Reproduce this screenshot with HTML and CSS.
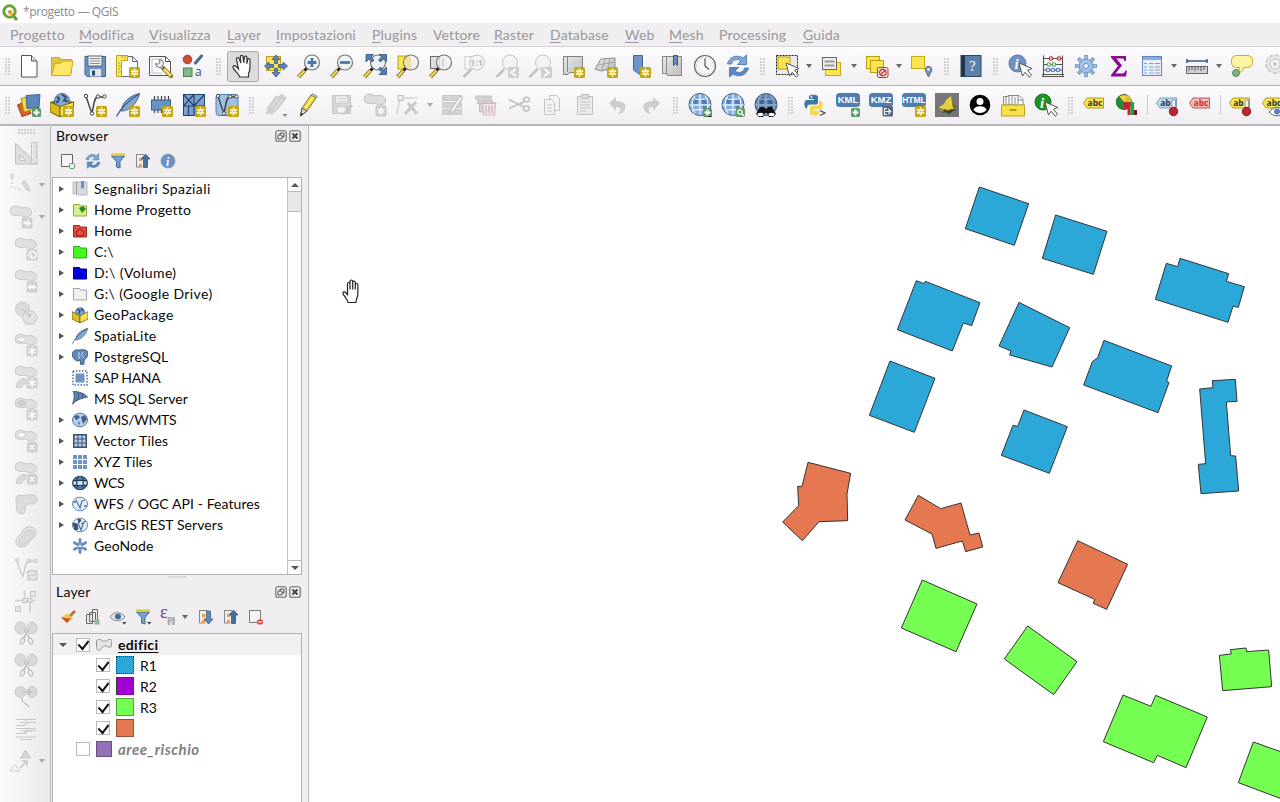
FILE: index.html
```html
<!DOCTYPE html>
<html lang="it">
<head>
<meta charset="utf-8">
<title>*progetto — QGIS</title>
<link rel="stylesheet" href="styles.css">
</head>
<body>
<svg class="paints">
<defs>
<linearGradient id="grey" x1="0" y1="0" x2="1" y2="1"><stop offset="0" stop-color="#e9e9e9"/><stop offset="1" stop-color="#bdbdbd"/></linearGradient>
</defs>
</svg>
<svg class="symbols">
<!-- badges, drawn in the lower right corner of a 24 unit icon -->
<symbol id="b-star" viewBox="0 0 24 24"><rect x="13" y="13" width="11" height="11" rx="1.500" fill="#c5a80f"/><path d="M18.500 14.500v8M15 16.500l7 4M22 16.500l-7 4" stroke="#fffbe0" stroke-width="1.800"/><circle cx="18.500" cy="18.500" r=".8" fill="#c5a80f"/></symbol>
<symbol id="b-plus" viewBox="0 0 24 24"><rect x="15" y="15" width="9" height="9" rx="1.500" fill="#5e9a68"/><path d="M19.500 16.500v6M16.500 19.500h6" stroke="#fff" stroke-width="2"/></symbol>
<symbol id="b-gstar" viewBox="0 0 24 24"><rect x="12.500" y="12.500" width="11" height="11" rx="1.500" fill="#c9c8ca"/><path d="M18 14v8M14.600 16l6.800 4M21.400 16l-6.800 4" stroke="#f8f7f8" stroke-width="1.700"/></symbol>
<symbol id="b-gx" viewBox="0 0 24 24"><rect x="13" y="13" width="10.500" height="10.500" rx="1.500" fill="#c9c8ca"/><path d="M16 16l4.500 4.500M20.500 16l-4.500 4.500" stroke="#fff" stroke-width="1.500"/></symbol>
<symbol id="blob" viewBox="0 0 24 24"><path d="M1.200 6C1.500 .5 7 .3 10 2s4 .3 6.500.5c8 .5 8 9.500.5 9.500-3 0-4-2-6.500-1.800C6 10.500 1 11 1.200 6z" fill="#dddcde" stroke="#bfbec1"/></symbol>
<!-- project toolbar -->
<symbol id="new" viewBox="0 0 24 24"><path d="M4.500 1.500h10l5.500 5.500v16H4.500z" fill="#fff" stroke="#555"/><path d="M14.500 1.500V7h5.500" fill="#ddd" stroke="#555"/></symbol>
<symbol id="open" viewBox="0 0 24 24"><path d="M1.500 21V3.500h8l1.500 2h10.500V19z" fill="#e3c343" stroke="#d1aa1a"/><path d="M1.500 21.500L5 9.500l6-.5 1.500-2h10.500l-2.500 14.500z" fill="#ffe76a" stroke="#d1aa1a"/></symbol>
<symbol id="save" viewBox="0 0 24 24"><path d="M2 2.500h20.500v20H4L2 20.500z" fill="#6e94c4" stroke="#3f638f"/><rect x="5" y="2" width="14" height="10" fill="#f1f1f1" stroke="#49698e"/><path d="M7 4.500h10M7 7h10M7 9.500h10" stroke="#888"/><rect x="7" y="15" width="11" height="7.500" fill="#e6e6e6"/><rect x="9" y="16.500" width="3" height="5" fill="#2d4767"/></symbol>
<symbol id="layout" viewBox="0 0 24 24"><path d="M2.500 2.500h14l5 5v15h-19z" fill="#fff" stroke="#666"/><path d="M16.500 2.500v5h5" fill="none" stroke="#666"/><path d="M.5 1.500h11v5h-6v16h-5z" fill="#fae867" stroke="#bda31a"/><path d="M2 9h2M2 12h3M2 15h2M2 18h3M6 2v2M9 2v3" stroke="#bda31a"/><use href="#b-star"/></symbol>
<symbol id="layouts" viewBox="0 0 24 24"><path d="M.5 2.500h16l5 5v14H.5z" fill="#fff" stroke="#555"/><path d="M16.500 2.500v5h5" fill="none" stroke="#555"/><path d="M3 5h10M3 5v14h10" fill="none" stroke="#b9b7dd"/><path d="M9 9.500l6 5.500" stroke="#777" stroke-width="4"/><path d="M9 9.500l6 5.500" stroke="#eee" stroke-width="2.600"/><path d="M10.500 5.500a4 4 0 11-4 4l2.500.8 1.800-1.800z" fill="#eee" stroke="#666" stroke-width=".9"/><path d="M15 15l7 7" stroke="#7d6c28" stroke-width="4.500" stroke-linecap="round"/><path d="M15 15l7 7" stroke="#f1da68" stroke-width="3"/></symbol>
<symbol id="style" viewBox="0 0 24 24"><circle cx="5.500" cy="5.500" r="4.300" fill="#c94f36" stroke="#9d3a27"/><rect x="1.500" y="14" width="8.500" height="8.500" fill="#80b78c" stroke="#4f8159"/><path d="M13.500 9l6-7" stroke="#46698e" stroke-width="3" stroke-linecap="round"/><text x="13" y="22" font-size="12" class="glyph">a</text></symbol>
<symbol id="hand" viewBox="0 0 24 24"><path d="M8.500 23c0-3-5.500-6-6.500-9.500C1.500 11.500 4 11 5 12.500l2.500 2.300L5.500 5.500c-.5-2 2-2.500 2.600-.7L9.800 9 9.300 3c-.1-2 2.400-2.300 2.700-.2l.8 6 .6-5.500c.3-1.800 2.600-1.500 2.600.4l-.2 6 1-4.200c.5-1.600 2.500-1.200 2.300.6C18.500 9.500 20 16 17.500 19v4z" fill="#fff" stroke="#333" stroke-width="1.200"/></symbol>
<symbol id="panmap" viewBox="0 0 24 24"><rect x="2.500" y="2.500" width="14" height="14" fill="#fbe54e" stroke="#b99e17"/><path d="M12 1l4 4.500h-2.500v4h-3v-4H8zM12 23l4-4.500h-2.500v-4h-3v4H8zM.5 12L5 8v2.500h4.500v3H5V16zM23.500 12L19 8v2.500h-4.500v3H19V16z" fill="#5e87b8" stroke="#355b87" stroke-width=".8"/></symbol>
<symbol id="lens" viewBox="0 0 24 24"><path d="M1.500 23l6-6.500" stroke="#8a7011" stroke-width="4"/><path d="M1.500 23l6-6.500" stroke="#efd45c" stroke-width="2.200"/><path d="M7.500 16.500L10 14" stroke="#222" stroke-width="3"/><circle cx="15" cy="8.500" r="7.500" fill="#eef0f2" fill-opacity=".8" stroke="#777" stroke-width="1.200"/></symbol>
<symbol id="zin" viewBox="0 0 24 24"><use href="#lens"/><path d="M15 4v9M10.500 8.500h9" stroke="#4878ae" stroke-width="2.800"/></symbol>
<symbol id="zout" viewBox="0 0 24 24"><use href="#lens"/><path d="M10 8.500h10" stroke="#4878ae" stroke-width="2.800"/></symbol>
<symbol id="zfull" viewBox="0 0 24 24"><use href="#lens"/><path d="M3 .5h7.500L8 3l3 3-2 2-3-3-3 3zM23.500.5H16L18.500 3l-3 3 2 2 3-3 3 3zM23.500 20.500H16l2.500-2.500-3-3 2-2 3 3 3-3z" fill="#557fb0" stroke="#2f547f" stroke-width=".8"/></symbol>
<symbol id="zsel" viewBox="0 0 24 24"><rect x="2" y="2" width="12" height="13" fill="#fbe54e" stroke="#b99e17"/><use href="#lens"/><path d="M10 3.500h5v10h-5z" fill="#eddf91" opacity=".8"/></symbol>
<symbol id="zlayer" viewBox="0 0 24 24"><path d="M1.500 2.500h9v12h-9z" fill="#ddd" stroke="#666"/><use href="#lens"/><path d="M14 4v9" stroke="#bbb"/></symbol>
<symbol id="glens" viewBox="0 0 24 24"><path d="M1.500 23l8-8" stroke="#c2c1c3" stroke-width="2.500"/><circle cx="15" cy="8.500" r="7.500" fill="#f4f3f4" stroke="#c4c3c5"/></symbol>
<symbol id="znative" viewBox="0 0 24 24"><path d="M3 2v13h8M3 2.500h8" fill="none" stroke="#ccc"/><use href="#glens"/><text x="8" y="12" font-size="9" font-weight="bold" class="glyph pale">1:1</text></symbol>
<symbol id="zlast" viewBox="0 0 24 24"><use href="#glens"/><rect x="13" y="13" width="11" height="11" rx="1" fill="#cfced0"/><path d="M21 15l-5 3.500 5 3.500" fill="none" stroke="#fff" stroke-width="1.600"/></symbol>
<symbol id="znext" viewBox="0 0 24 24"><use href="#glens"/><rect x="13" y="13" width="11" height="11" rx="1" fill="#cfced0"/><path d="M16 15l5 3.500-5 3.500" fill="none" stroke="#fff" stroke-width="1.600"/></symbol>
<symbol id="mapview" viewBox="0 0 24 24"><path d="M2.500 2.500h19v16h-13l-1.500 2h-4.500z" fill="url(#grey)" stroke="#808080"/><path d="M6.500 3v15" stroke="#888"/><use href="#b-star"/></symbol>
<symbol id="map3d" viewBox="0 0 24 24"><path d="M7 5l14-1v10l-14 3-6-2z" fill="url(#grey)" stroke="#8a8a8a"/><path d="M4 11l17-3M11 5l-3 11M16 4l-2 11" stroke="#999" stroke-width=".8"/><use href="#b-star"/></symbol>
<symbol id="bookmarkNew" viewBox="0 0 24 24"><path d="M6.500 1.500h9v21l-9-6.500z" fill="#6d95c5" stroke="#416795"/><use href="#b-star"/></symbol>
<symbol id="bookmarks" viewBox="0 0 24 24"><path d="M2.500 2.500h19v19h-14l-2-2h-3z" fill="url(#grey)" stroke="#858585"/><path d="M6.500 3v17" stroke="#888"/><path d="M13.500 1.500h4v10l-2-2-2 2z" fill="#638bbc" stroke="#355b87"/></symbol>
<symbol id="clock" viewBox="0 0 24 24"><circle cx="12" cy="12" r="10.500" fill="#f6f6f6" stroke="#666" stroke-width="1.200"/><path d="M12 4.500V12l4 3.500" fill="none" stroke="#555" stroke-width="1.200"/><circle cx="12" cy="12" r="8.500" fill="none" stroke="#999" stroke-dasharray="1 3.450"/></symbol>
<symbol id="refresh" viewBox="0 0 24 24"><path d="M1.500 10C3 3 11 0 17 4l3.500-3V10.500h-9L15 7c-4-3-9-1-9.500 3z" fill="#83a8d4" stroke="#3c71ad" stroke-width=".8"/><path d="M22.500 14C21 21 13 24 7 20l-3.500 3V13.500h9L9 17c4 3 9 1 9.500-3z" fill="#5c8ac0" stroke="#3c71ad" stroke-width=".8"/></symbol>
<symbol id="arrowcur" viewBox="0 0 24 24"><path d="M11 9l13 5.500-4.500 1.700 4 5-2.300 2-4-5L14.500 22z" fill="#fff" stroke="#555"/></symbol>
<symbol id="select" viewBox="0 0 24 24"><rect x="1.500" y="1.500" width="21" height="19" fill="#ebe9ec" stroke="#222" stroke-dasharray="2 1"/><rect x="3" y="3" width="12" height="12" fill="#fbe54e" stroke="#b99e17"/><use href="#arrowcur"/></symbol>
<symbol id="selform" viewBox="0 0 24 24"><rect x="5.500" y="8.500" width="15" height="13" fill="#fbe54e" stroke="#c7aa16"/><rect x="2.500" y="3.500" width="14" height="12" fill="#eee" stroke="#666"/><path d="M4.500 7.500h10M4.500 11.500h10" stroke="#999" stroke-width="2"/></symbol>
<symbol id="deselect" viewBox="0 0 24 24"><rect x="1.500" y="2.500" width="13" height="12" fill="#fbe54e" stroke="#b99e17"/><rect x="5.500" y="6.500" width="13" height="12" fill="#fbe54e" stroke="#b99e17"/><rect x="12.500" y="13.500" width="10.500" height="10" rx="1.500" fill="#f5e0e0" stroke="#c0342d"/><circle cx="17.800" cy="18.500" r="3.200" fill="none" stroke="#c0342d" stroke-width="1.200"/><path d="M15.500 20.700l4.600-4.400" stroke="#c0342d" stroke-width="1.300"/></symbol>
<symbol id="selloc" viewBox="0 0 24 24"><rect x="1.500" y="2.500" width="13" height="12" fill="#fbe54e" stroke="#c7aa16"/><path d="M18.500 23l-3-6a3.300 3.300 0 116 0z" fill="#7a8fa8" stroke="#5b7089"/><circle cx="18.500" cy="15.500" r="1.200" fill="#fff"/></symbol>
<symbol id="help" viewBox="0 0 24 24"><rect x="2" y="1.500" width="20" height="21" fill="#5a80ae" stroke="#31465f"/><path d="M2 1.500h4v21H2z" fill="#23364d"/><text x="10" y="17" font-size="15" class="glyph serif">?</text></symbol>
<symbol id="identify" viewBox="0 0 24 24"><circle cx="9.500" cy="9.500" r="8.500" fill="#6c93c2" stroke="#58789d"/><text x="6.500" y="15" font-size="15" class="glyph serif ital">i</text><use href="#arrowcur"/></symbol>
<symbol id="abacus" viewBox="0 0 24 24"><path d="M2.500 1.500v21M21.500 1.500v21M1 22.500h22M1 20.500h22M2 4.500h20M2 10.500h20M2 16h20" stroke="#555" stroke-width="1.100"/><g stroke-width="1.100"><g fill="#f4d1cd" stroke="#c2271f"><circle cx="10" cy="4.500" r="1.800"/><circle cx="18" cy="4.500" r="1.800"/></g><g fill="#d5f0d6" stroke="#5aa35e"><circle cx="8" cy="10.500" r="1.800"/><circle cx="13" cy="10.500" r="1.800"/></g><g fill="#d3e2f5" stroke="#4c7db6"><circle cx="7" cy="16" r="1.800"/><circle cx="12" cy="16" r="1.800"/><circle cx="17" cy="16" r="1.800"/></g></g></symbol>
<symbol id="gear" viewBox="0 0 24 24"><path d="M12 1v22M1 12h22M4.200 4.200l15.600 15.600M19.800 4.200L4.200 19.800" stroke="#6891c4" stroke-width="3.600"/><path d="M12 2v20M2 12h20M5 5l14 14M19 5L5 19" stroke="#a2c1e7" stroke-width="2"/><circle cx="12" cy="12" r="7" fill="#a2c1e7" stroke="#6891c4"/><circle cx="12" cy="12" r="2.500" fill="#f5f4f6" stroke="#6891c4"/></symbol>
<symbol id="sigma" viewBox="0 0 24 24"><path d="M4 2h15v5h-1.500c-.5-2-1-2.500-3-2.500H9.500l5.500 7-6.500 8h6.500c2 0 3-1 3.500-3H20l-1 6H4v-1.500L11 12 4 3.500z" fill="#8c0a94"/></symbol>
<symbol id="table" viewBox="0 0 24 24"><rect x="2.500" y="2.500" width="19" height="19" fill="#e9f0fa" stroke="#5e88bd"/><path d="M3 4.500h18" stroke="#89aedb" stroke-width="3"/><path d="M4 9.500h3M9 9.500h4.500M15 9.500h5M4 13h3M9 13h4.500M15 13h5M4 16h3M9 16h4.500M15 16h5M4 19h3M9 19h4.500M15 19h5" stroke="#7f9fc9" stroke-width="1.200"/></symbol>
<symbol id="measure" viewBox="0 0 24 24"><path d="M2 7h20M2 5v4M22 5v4" stroke="#355b87" stroke-width="1.600"/><rect x="1.500" y="12.500" width="21" height="7" fill="#d2d2d2" stroke="#666"/><path d="M4 13v4M7 13v3M10 13v4M13 13v3M16 13v4M19 13v3" stroke="#555"/></symbol>
<symbol id="tip" viewBox="0 0 24 24"><rect x="1.500" y="1.500" width="21" height="12" rx="5" fill="#fdf5a2" stroke="#c7aa16"/><path d="M9 13h6l-6 7z" fill="#fdf5a2" stroke="#c7aa16"/><path d="M9.500 12.500h5" stroke="#fdf5a2" stroke-width="2"/><circle cx="6" cy="19" r="3.500" fill="#7eb184" stroke="#5c8c62"/></symbol>
<symbol id="play" viewBox="0 0 24 24"><circle cx="12" cy="10" r="9" fill="#e5e4e6" stroke="#ccc" stroke-dasharray="4 2" stroke-width="2"/><circle cx="12" cy="10" r="5" fill="#f4f4f4" stroke="#c3c3c3"/><path d="M10.500 7.500l4 2.500-4 2.500z" fill="#bbb"/></symbol>
<!-- data source toolbar -->
<symbol id="sources" viewBox="0 0 24 24"><path d="M.5 12L8 8.500l6 12-9 3z" fill="#d7612c" stroke="#973f1a"/><path d="M4 5.500l8-2 5 13-10 2.500z" fill="#f1d845" stroke="#ab8f11"/><path d="M9 2.500l14-1-1 13-12 1z" fill="#5b87bb" stroke="#416795"/><use href="#b-plus"/></symbol>
<symbol id="gpkg" viewBox="0 0 24 24"><path d="M0 9l11-4 13 4-13 5z" fill="#8f7813"/><circle cx="12" cy="8" r="7.500" fill="#86a9d0" stroke="#4c6b90"/><path d="M7 3.500l2 2-1 3-2 1M12 1.500l4 3-2 3 4 1" fill="none" stroke="#2f5077" stroke-width="2"/><path d="M0 9l10 4.500V24L0 19z" fill="#d8bb1f" stroke="#75600c"/><path d="M10 13.500L23.500 9v10L10 24z" fill="#f8e24d" stroke="#75600c"/><use href="#b-star"/></symbol>
<symbol id="vnew" viewBox="0 0 24 24"><path d="M3 3.500C5 8 6 14 9 20 11 12 11 4 15 4h5" fill="none" stroke="#444" stroke-width="1.500"/><g fill="#fff" stroke="#444"><circle cx="3" cy="3" r="1.700"/><circle cx="9" cy="20.500" r="1.700"/><circle cx="15" cy="3.500" r="1.700"/><circle cx="21.500" cy="3.500" r="1.700"/></g></symbol>
<symbol id="shp" viewBox="0 0 24 24"><use href="#vnew"/><use href="#b-star"/></symbol>
<symbol id="feather" viewBox="0 0 24 24"><path d="M23.500.5C17 2 10 6 7 12c-1 2-1 4-2 6C14 18 22 9 23.500.500z" fill="#86a8d1" stroke="#3d5f87"/><path d="M.5 23.500C5 15 13 7 23 1" fill="none" stroke="#355b87" stroke-width="1.200"/></symbol>
<symbol id="spatial" viewBox="0 0 24 24"><use href="#feather"/><use href="#b-star"/></symbol>
<symbol id="chip" viewBox="0 0 24 24"><path d="M5.500 3v17M9 3v17M12.500 3v17M16 3v16M19.500 3v16" stroke="#444" stroke-width="1.200"/><rect x="2.500" y="7" width="19" height="10" fill="#6793c6" stroke="#3b618e"/><use href="#b-star"/></symbol>
<symbol id="mesh" viewBox="0 0 24 24"><rect x="1.500" y="1.500" width="21" height="21" fill="#7aa1d0" stroke="#22456e"/><path d="M12 1.500v21M1.500 13h21M1.500 1.500L12 13M12 1.500L1.500 13M12 13L22.500 1.500M6.500 13v10" stroke="#22456e" stroke-width="1.200"/><use href="#b-star"/></symbol>
<symbol id="virt" viewBox="0 0 24 24"><rect x="1" y="1.500" width="22" height="21" rx="3" fill="#9fc0e5" stroke="#567fae"/><use href="#vnew"/><use href="#b-star"/></symbol>
<!-- editing -->
<symbol id="pens" viewBox="0 0 24 24"><path d="M2.500 21l1-6L12 3l2.500 1 3-3 2 1 1 1.500 2 1-9 12-6 5-1.500-1.500z" fill="#cfced0" stroke="#cfced0"/><path d="M7 14l7-9M10 17l8-11" stroke="#dddcde" stroke-width="1.300"/><path d="M18.500 21h5L21 24z" fill="#8c8b8d"/></symbol>
<symbol id="pencil" viewBox="0 0 24 24"><path d="M3.500 23l1.500-8L14 2l5 3-9 13z" fill="#e3d343" stroke="#8d7d15"/><path d="M3.500 23l1.500-8 5 3z" fill="#dcd6cb" stroke="#555"/><path d="M3.500 23l.6-3.200 2 1.200z" fill="#222"/><path d="M14 2l1.500-1.500 5 3L19 5z" fill="#b9cdb4" stroke="#628261" stroke-width=".7"/><path d="M8 15.500L16 4" stroke="#fff59d" stroke-width="1.500"/></symbol>
<symbol id="gsave" viewBox="0 0 24 24"><path d="M2.500 2.500h18v18h-18z" fill="#d6d5d7" stroke="#c5c4c6"/><path d="M5.500 3h12v7h-12zM7 14h9v6H7z" fill="#f5f4f5" stroke="#ccc"/><path d="M7 5.500h9M7 8h9" stroke="#ccc"/><path d="M13 22l2-5 5-6 3 2-5 7z" fill="#c9c8ca"/></symbol>
<symbol id="gadd" viewBox="0 0 24 24"><use href="#blob"/><use href="#b-gstar"/></symbol>
<symbol id="gvert" viewBox="0 0 24 24"><path d="M1 21L4 5h18" fill="none" stroke="#c4c3c5"/><rect x="2" y="2.500" width="5" height="5" fill="#eee" stroke="#bbb"/><path d="M12 10l9 11M20 9L9 21" stroke="#c9c8ca" stroke-width="3.200"/></symbol>
<symbol id="gattr" viewBox="0 0 24 24"><path d="M1.500 2.500h19v5h-19zM1.500 9.500h19v5h-19zM1.500 16.500h19v5h-19z" fill="#d3d2d4" stroke="#c9c8ca"/><path d="M9 21l1.500-5.500L19 3l3 2-9 13z" fill="#eeedef" stroke="#bbb"/></symbol>
<symbol id="gtrash" viewBox="0 0 24 24"><path d="M1.500 3h16v3h-16zM3.500 7.500h15v3h-15zM5.500 11h4v8h-4z" fill="#d3d2d4" stroke="#c0bfc1"/><path d="M8.500 10.500h13l-1 11.500h-11z" fill="#f0e3e6" stroke="#cdb9be"/><path d="M7.500 10h15M12 13v7M15 13v7M18 13v7" stroke="#cdb9be" stroke-width="1.400"/></symbol>
<symbol id="cut" viewBox="0 0 24 24"><path d="M1.500 6.500l16 7.500M2 15.500L18 8.500" stroke="#c0bfc1" stroke-width="1.700"/><g fill="none" stroke="#c0bfc1" stroke-width="1.500"><ellipse cx="19.500" cy="6.500" rx="3" ry="2.300"/><ellipse cx="19.500" cy="15.500" rx="3" ry="2.500"/></g></symbol>
<symbol id="copy" viewBox="0 0 24 24"><g fill="#f5f4f5" stroke="#c3c2c4"><path d="M9.500 2.500h7l3 3v12h-10z"/><path d="M4.500 6.500h7l3 3v12h-10z"/><path d="M7 12h5M7 15h5M7 18h5"/></g></symbol>
<symbol id="paste" viewBox="0 0 24 24"><path d="M4.500 3.500h15v18h-15z" fill="#eae9eb" stroke="#bfbec0"/><path d="M8.500 1.500h7v4h-7z" fill="#ddd" stroke="#bbb"/><path d="M7 9h10M7 12h10M7 15h10M7 18h6" stroke="#c7c6c8"/></symbol>
<symbol id="undo" viewBox="0 0 24 24"><path d="M3 10l7-6v4c8 0 11 4 9 8-1 3-4 5-7 5 3-3 4-7-2-7v4z" fill="#cdccce"/></symbol>
<symbol id="redo" viewBox="0 0 24 24"><path d="M21 10l-7-6v4c-8 0-11 4-9 8 1 3 4 5 7 5-3-3-4-7 2-7v4z" fill="#cdccce"/></symbol>
<!-- plugins -->
<symbol id="globe" viewBox="0 0 24 24"><circle cx="12" cy="11.500" r="11" fill="#83aee0" stroke="#42617f"/><path d="M5 7l3-3 3 2-2 5-3 1zM13 7l5-2 3 5-3 6-3-1z" fill="#3f6898" opacity=".7"/><path d="M4 5c4 2 12 2 16 0M1.500 12h21M4 18c4-2 12-2 16 0M12 1v21M7 2.500c-4 6-4 12 0 18M17 2.500c4 6 4 12 0 18" fill="none" stroke="#e5effb" stroke-width="1.300"/></symbol>
<symbol id="globeadd" viewBox="0 0 24 24"><use href="#globe"/><use href="#b-plus"/><path d="M19 23h5l-2.500 2z" fill="#222"/></symbol>
<symbol id="globefind" viewBox="0 0 24 24"><use href="#globe"/><rect x="15" y="15" width="9" height="9" rx="1.500" fill="#5e9a68"/><circle cx="19" cy="19" r="2.200" fill="none" stroke="#fff" stroke-width="1.200"/><path d="M20.500 20.500l2.500 2.500" stroke="#fff" stroke-width="1.300"/></symbol>
<symbol id="binoc" viewBox="0 0 24 24"><use href="#globe"/><circle cx="12" cy="11.500" r="11" fill="#274b77" opacity=".4"/><path d="M6 14h4l1 1.500h2L14 14h4l4 7-3 3h-4l-2-4h-2l-2 4H5l-3-3z" fill="#111"/><g fill="#fff"><ellipse cx="6.500" cy="21.500" rx="3" ry="1.700"/><ellipse cx="17.500" cy="21.500" rx="3" ry="1.700"/></g></symbol>
<symbol id="python" viewBox="0 0 24 24"><path d="M6 6V3.500C6 1 15 1 15 3.500V9c0 2-1 2.500-3 2.500H7c-2 0-3 1-3 4C.5 15.500.5 7 4 7h7V6z" fill="#3d78a9"/><path d="M16 7.500c5-.5 5 9 1 9h-6V18h5v2.500c0 2.500-9 2.500-9 0V15c0-2 1-2.500 3-2.500h4c2 0 2-1 2-5z" fill="#f7d948"/><circle cx="8.500" cy="4" r=".9" fill="#fff"/><path d="M17 17.500l5 2.500-5 2.500" fill="none" stroke="#444" stroke-width="1.200"/></symbol>
<symbol id="tagbox" viewBox="0 0 24 24"><rect x="0" y="0" width="24" height="14" rx="3.500" fill="#4d7db1"/></symbol>
<symbol id="kml" viewBox="0 0 24 24"><use href="#tagbox"/><text x="12" y="10" class="tag">KML</text><use href="#b-plus"/></symbol>
<symbol id="kmz" viewBox="0 0 24 24"><use href="#tagbox"/><text x="12" y="10" class="tag">KMZ</text><rect x="13.500" y="13" width="10.500" height="10.500" rx="1.500" fill="#53677f"/><path d="M16.500 18.500h5M19 16l2.800 2.500L19 21M18 15.500h-2.500v6H18" fill="none" stroke="#fff" stroke-width="1.100"/></symbol>
<symbol id="html" viewBox="0 0 24 24"><use href="#tagbox"/><text x="12" y="10" class="tag tight">HTML</text><use href="#b-star"/></symbol>
<symbol id="profile" viewBox="0 0 24 24"><rect width="24" height="24" fill="#777579"/><path d="M3 15l6-4 2-4 5-4 2 7 3 3-4 4-6 2-4-1z" fill="#e6cf3c"/><path d="M16 3l2 7 4 4-4 1z" fill="#6a5d1a"/><path d="M1 14l6 2 5 2 5-2 5 1-5 1.500-3 3-3-2.500-4 1 2-2z" fill="#1f4a22"/><path d="M9 16.500l4 1 5-1" stroke="#963c1f" stroke-width="1.200" fill="none"/></symbol>
<symbol id="user" viewBox="0 0 24 24"><circle cx="12" cy="12" r="10.300" fill="#000"/><circle cx="12" cy="8.500" r="3.500" fill="#fff"/><path d="M5.500 17c1-5 12-5 13 0-3 4-10 4-13 0z" fill="#fff"/></symbol>
<symbol id="archive" viewBox="0 0 24 24"><path d="M2.500 12V3.500H7v-1h11l4 4V12z" fill="#fff" stroke="#888"/><path d="M5 4v8M8 3v9M11 3v9M14 4v8M17 3v4h5M17 7v5" fill="none" stroke="#888"/><rect x=".5" y="12" width="23" height="11" fill="#f6e04a" stroke="#bca21c"/><rect x="8.500" y="16" width="7" height="2" fill="#b79712"/></symbol>
<symbol id="ginfo" viewBox="0 0 24 24"><circle cx="9" cy="9" r="8" fill="#1f941f" stroke="#167116"/><text x="6" y="14.500" font-size="15" class="glyph serif ital">i</text><use href="#arrowcur"/></symbol>
<symbol id="lab" viewBox="0 0 24 24"><path d="M1.500 10L5 5h16.500v10H5z"/></symbol>
<symbol id="label" viewBox="0 0 24 24"><use href="#lab" fill="#f7e65a" stroke="#b79b17"/><text x="13" y="13" class="abc">abc</text></symbol>
<symbol id="diagram" viewBox="0 0 24 24"><circle cx="9" cy="9" r="7.500" fill="#f0d53e" stroke="#554a18"/><path d="M9 9L4 3A7.500 7.500 0 009 16.500z" fill="#288638"/><path d="M9 9l3-7A7.500 7.500 0 0116.500 9z" fill="#d8c22f"/><path d="M9 9h7.500A7.500 7.500 0 019 16.500z" fill="#c8232c"/><path d="M12.500 12h3v10h-3z" fill="#d41f2b"/><path d="M15.500 9H19v13h-3.500z" fill="#1ca34a"/><path d="M19 17h3v5h-3z" fill="#72141a"/></symbol>
<symbol id="pin" viewBox="0 0 24 24"><path d="M17 7h3.500v8H17z" fill="#f4f4f4" stroke="#888" stroke-width=".8"/><circle cx="18.500" cy="18.500" r="4.200" fill="#bd2430" stroke="#8b1a22"/></symbol>
<symbol id="labpin" viewBox="0 0 24 24"><use href="#lab" fill="#bed8f4" stroke="#7a9fc7"/><text x="10.500" y="13" class="abc">ab</text><use href="#pin"/></symbol>
<symbol id="labred" viewBox="0 0 24 24"><use href="#lab" fill="#f5bcbc" stroke="#a95a5a"/><text x="13" y="13" class="abc red">abc</text></symbol>
<symbol id="labypin" viewBox="0 0 24 24"><use href="#lab" fill="#f7e65a" stroke="#b79b17"/><text x="10.500" y="13" class="abc">ab</text><use href="#pin"/></symbol>
<symbol id="labeye" viewBox="0 0 24 24"><use href="#label"/><path d="M8 19c4-6 12-6 16 0-4 5-12 5-16 0z" fill="#fff" stroke="#666"/><circle cx="16" cy="18.500" r="3" fill="#5682b5"/></symbol>
<!-- advanced digitizing -->
<symbol id="setsq" viewBox="0 0 24 24"><path d="M1.500 2v21h22zM6 14v5.500h5.500z" fill="#d9d8da" stroke="#b5b4b6" fill-rule="evenodd"/><path d="M17.500 1.500h5.500v21h-5.500z" fill="#e4e3e5" fill-opacity=".6" stroke="#bbb"/><path d="M20 5h3M20 8h3M20 11h3M20 14h3M20 17h3" stroke="#bbb"/></symbol>
<symbol id="dpen" viewBox="0 0 24 24"><path d="M3 5v9l9 3" fill="none" stroke="#cbcacc" stroke-width="1.500" stroke-dasharray="2 2"/><path d="M1.500 1.500h3v3h-3z" fill="#e8e7e9" stroke="#c5c4c6"/><path d="M21 18l-3.500-1-5-8 3-2 5 8z" fill="#d3d2d4" stroke="#c9c8ca"/></symbol>
<symbol id="dmove" viewBox="0 0 24 24"><use href="#blob"/><rect x="12.500" y="12.500" width="11" height="11" rx="1.500" fill="#c9c8ca"/><path d="M14.500 16.500h3.500V14l4 4-4 4v-2.500h-3.500z" fill="#f8f7f8"/></symbol>
<symbol id="drot" viewBox="0 0 24 24"><use href="#blob"/><rect x="12.500" y="12.500" width="11" height="11" rx="1.500" fill="#c9c8ca"/><path d="M20 21a3.500 3.500 0 10-4.500-1M17.500 17v4h3.500" fill="none" stroke="#fff" stroke-width="1.500"/></symbol>
<symbol id="dscale" viewBox="0 0 24 24"><use href="#blob"/><rect x="12.500" y="12.500" width="11" height="11" rx="1.500" fill="#c9c8ca"/><path d="M13.500 18l3.500-3v6zM22.500 18L19 15v6z" fill="#fff"/><path d="M16 18h4" stroke="#fff" stroke-width="2"/></symbol>
<symbol id="dsimp" viewBox="0 0 24 24"><circle cx="8.500" cy="8" r="7" fill="#d7d6d8" stroke="#c0bfc1"/><path d="M11.500 10h8l4 6.500-4 6.500h-8L8 16.500z" fill="#dfdee0" stroke="#c0bfc1"/><path d="M8 8l7.500 6" stroke="#aaa"/><circle cx="15.500" cy="14.500" r="1.200" fill="#aaa"/></symbol>
<symbol id="dring" viewBox="0 0 24 24"><use href="#blob"/><ellipse cx="7.500" cy="6.500" rx="4" ry="2.500" fill="#f8f7f8" stroke="#c4c3c5"/><use href="#b-gstar"/></symbol>
<symbol id="dpart" viewBox="0 0 24 24"><use href="#blob"/><path d="M2.500 22c-1-4 4-9 8-8.500 3 .5 1 5-1.500 7s-5 3-6.500 1.500z" fill="#d4d3d5" stroke="#bfbec1"/><use href="#b-gstar"/></symbol>
<symbol id="dfill" viewBox="0 0 24 24"><use href="#blob"/><ellipse cx="7.500" cy="6" rx="4" ry="2.500" fill="#cac9cb" stroke="#bbb"/><use href="#b-gstar"/></symbol>
<symbol id="ddelr" viewBox="0 0 24 24"><use href="#blob"/><ellipse cx="7.500" cy="6" rx="4" ry="2.500" fill="#fff" stroke="#c4c3c5"/><use href="#b-gx"/></symbol>
<symbol id="ddelp" viewBox="0 0 24 24"><use href="#blob"/><path d="M2.500 22c-1-4 4-9 8-8.500 3 .5 1 5-1.500 7s-5 3-6.500 1.500z" fill="#d4d3d5" stroke="#bfbec1"/><use href="#b-gx"/></symbol>
<symbol id="dresh" viewBox="0 0 24 24"><path d="M2 6c0-5 4-3.500 8-3.500S18 .5 21.500 3s1 8-3 8-7 0-7 4-1 6-4 6C2 22 2 12 2 6z" fill="#d7d6d8" stroke="#bfbec1"/></symbol>
<symbol id="doff" viewBox="0 0 24 24"><path d="M2 18c-1-5 4-7 6-11s5-6 9-5 7 5 4 9-5 4-7 8-10 5-12-1z" fill="#dddcde" stroke="#bfbec1"/><path d="M5 17c0-3 4-5 6-8s3-5 7-3 1 6-2 8-4 5-6 6-5 0-5-3z" fill="#d5d4d6" stroke="#c3c2c4"/></symbol>
<symbol id="drev" viewBox="0 0 24 24"><path d="M3 4c2 7 3 11 6 15C11 12 11 5 15 4h7" fill="none" stroke="#c4c3c5" stroke-width="1.500"/><g fill="#ddd" stroke="#c4c3c5"><path d="M1.500 1.500h3v3h-3zM13.500 2.500h3v3h-3zM20 2.500h3v3h-3z"/></g><rect x="13" y="13" width="10.500" height="10.500" rx="1.500" fill="#c9c8ca"/><path d="M15.500 18c0-3 4-3 5-1M21 18.500c0 3-4 3-5 1" stroke="#fff" fill="none" stroke-width="1.300"/></symbol>
<symbol id="dtrim" viewBox="0 0 24 24"><path d="M10.500 1v14M1 11.500h20M16 12v11" stroke="#c9c8ca" stroke-width="1.600"/><path d="M16.500 2.500h5v5h-5zM1.500 17.500h5v5h-5zM8.500 9.500h4v4h-4zM14 9.500h4v4h-4z" fill="#e4e3e5" stroke="#bbb"/></symbol>
<symbol id="dsplit" viewBox="0 0 24 24"><ellipse cx="6.500" cy="7" rx="5.500" ry="6" fill="#d4d3d5" stroke="#c0bfc1"/><ellipse cx="18" cy="7" rx="5" ry="6" fill="#d4d3d5" stroke="#c0bfc1"/><path d="M10 8l6 10M15 8L9 18" stroke="#b5b4b6" stroke-width="1.500"/><ellipse cx="8.500" cy="20" rx="2" ry="3" fill="#eee" stroke="#aaa" transform="rotate(25 8.500 20)"/><ellipse cx="16.500" cy="20" rx="2" ry="3" fill="#eee" stroke="#aaa" transform="rotate(-25 16.500 20)"/></symbol>
<symbol id="dmerge" viewBox="0 0 24 24"><ellipse cx="6.500" cy="7" rx="5.500" ry="5.500" fill="#d4d3d5" stroke="#c0bfc1"/><ellipse cx="18" cy="7" rx="5" ry="5.500" fill="#d4d3d5" stroke="#c0bfc1"/><path d="M7 7h10M14 4l3 3-3 3M8 13c-1 5 4 5 7 9" fill="none" stroke="#bbb" stroke-width="1.500"/></symbol>
<symbol id="dattr" viewBox="0 0 24 24"><path d="M2 2.500h20M2 8.500h8l4-3h8M2 11.500h20M2 16.500h8l4-3h8M2 20h20M6 5.500h5M13 5.500h5M6 14h5M13 14h5M6 22.500h12M12 3v5M12 12v5" fill="none" stroke="#bdbcbe" stroke-width="1.200"/></symbol>
<symbol id="drsym" viewBox="0 0 24 24"><path d="M11.500 9l5-8 5 8z" fill="#d0cfd1" stroke="#bbb"/><path d="M1 22l5-7 5 7z" fill="#f0eff1" stroke="#ccc"/><path d="M11 19l6-6M13 12h5v5" fill="none" stroke="#bbb" stroke-width="1.500"/></symbol>
<!-- dock icons, 16 unit grid -->
<symbol id="addlay" viewBox="0 0 16 16"><path d="M1.500 1.500h11v12h-11z" fill="#f6f5f6" stroke="#666"/><rect x="9.500" y="10.500" width="5" height="5" rx="1" fill="#e5f2e6" stroke="#5e9a68"/></symbol>
<symbol id="filter" viewBox="0 0 16 16"><path d="M1.500 3h13L10 8.500V15l-3.500-1V8.500z" fill="#7a9fce" stroke="#446b99"/><path d="M1 1.500h14" stroke="#e4cf35" stroke-width="2.500"/></symbol>
<symbol id="tree" viewBox="0 0 16 16"><path d="M1 1.500h8M1.500 2v12h5" fill="none" stroke="#888"/><path d="M4 5h3v3H4zM4 11h3v3H4z" fill="#e8a04e"/></symbol>
<symbol id="collapse" viewBox="0 0 16 16"><use href="#tree"/><path d="M10.500 1l4.500 5h-2.500v8.500h-4V6H6z" fill="#466f9e" stroke="#2c4b70" stroke-width=".7"/></symbol>
<symbol id="expand" viewBox="0 0 16 16"><use href="#tree"/><path d="M10.500 15L15 10h-2.500V2h-4v8H6z" fill="#5e8abd" stroke="#2c4b70" stroke-width=".7"/></symbol>
<symbol id="info" viewBox="0 0 16 16"><circle cx="8" cy="8" r="7" fill="#6990c0" stroke="#8aa5c5"/><text x="6" y="12.500" font-size="12" class="glyph serif ital">i</text></symbol>
<symbol id="brush" viewBox="0 0 16 16"><path d="M9 8l6-6" stroke="#ad7c36" stroke-width="3"/><path d="M1 8c3 0 4-2 6-4l6 5c-2 1-3 3-6 5z" fill="#e8c94a"/><path d="M1 8c4 1 6 2 10 1l-4 5z" fill="#d04a31"/></symbol>
<symbol id="addgrp" viewBox="0 0 16 16"><path d="M1.500 5.500h6v9h-6zM4.500 3.500h6v9h-6zM7.500 .5h5v12h-5z" fill="#e9edf1" fill-opacity=".7" stroke="#666"/><rect x="9.500" y="10.500" width="5" height="5" fill="#93b798"/></symbol>
<symbol id="eye" viewBox="0 0 16 16"><path d="M0 8c4-6 11-6 15 0-4 5-11 5-15 0z" fill="#dfe5ec" stroke="#888"/><circle cx="8" cy="7.500" r="3" fill="#476b96"/><path d="M12 13h4.500l-2.200 2.500z" fill="#444"/></symbol>
<symbol id="filt2" viewBox="0 0 16 16"><use href="#filter"/><path d="M12 13h4.500l-2.200 2.500z" fill="#444"/></symbol>
<symbol id="eps" viewBox="0 0 16 16"><text x="0" y="9" font-size="18" class="glyph serif purple">ε</text><path d="M8 15.500V8.500h6.500v7h-2v-4h-2.500v4z" fill="#bbb" stroke="#999" stroke-width=".6"/></symbol>
<symbol id="remlay" viewBox="0 0 16 16"><path d="M1.500 1.500h11v12h-11z" fill="#f6f5f6" stroke="#777"/><rect x="9" y="10.500" width="6" height="5" rx="2" fill="#df4238"/><path d="M10 13h4" stroke="#fff"/></symbol>
<symbol id="t-book" viewBox="0 0 16 16"><path d="M1 1h14v13H5l-1-1H1z" fill="#d8d9de" stroke="#b9b9c2"/><path d="M4.500 1v12" stroke="#999"/><path d="M9 0h3v8l-1.500-1.500L9 8z" fill="#6a8fbd"/></symbol>
<symbol id="fold" viewBox="0 0 16 16"><path d="M1.500 2.500h6l1 1.500h6v10h-13z"/></symbol>
<symbol id="t-proj" viewBox="0 0 16 16"><use href="#fold" fill="#d8ef8f" stroke="#96a83c"/><path d="M7 6l4-2 3 3-4 4z" fill="#268b28"/></symbol>
<symbol id="t-home" viewBox="0 0 16 16"><use href="#fold" fill="#e34d3d" stroke="#9f2b20"/><path d="M4 9l4-3.500L12 9l-1 4H5z" fill="none" stroke="#8f1b12"/></symbol>
<symbol id="t-c" viewBox="0 0 16 16"><use href="#fold" fill="#43f91d" stroke="#2fae15"/></symbol>
<symbol id="t-d" viewBox="0 0 16 16"><use href="#fold" fill="#0000e0" stroke="#00007d"/></symbol>
<symbol id="t-g" viewBox="0 0 16 16"><use href="#fold" fill="#f2f0f2" stroke="#a6a4a6"/></symbol>
<symbol id="t-gpkg" viewBox="0 0 24 24"><circle cx="12" cy="8" r="7" fill="#7ea3ce" stroke="#415f83"/><path d="M8 3l4 3-2 4M14 2l3 4" fill="none" stroke="#27466b" stroke-width="2"/><path d="M0 7l12 6v11L0 18z" fill="#dcbf25" stroke="#594a0b"/><path d="M12 13l12-6v11l-12 6z" fill="#f8e353" stroke="#594a0b"/></symbol>
<symbol id="t-pg" viewBox="0 0 16 16"><path d="M1 3c2-3 5-2 6-2s6-1 8 1 0 8-3 9v4l-3 1-1-5-2 1C2 12-1 6 1 3z" fill="#638bb9" stroke="#355b87"/><path d="M7 3v7M11 3c-2 3-1 5 1 6" stroke="#cad9eb" fill="none"/></symbol>
<symbol id="t-hana" viewBox="0 0 16 16"><path d="M1 1h14v14H1z" fill="none" stroke="#4b6f9d" stroke-width="1.500" stroke-dasharray="1.500 1.500"/><path d="M3.500 3.500h9v9h-9z" fill="#6d95c5"/></symbol>
<symbol id="t-ms" viewBox="0 0 16 16"><path d="M1 0c6 1 11 2 14.500 6-5 1-10 2-15 7 2-5 2.500-9 .5-13z" fill="#6285b0" stroke="#3c5778"/><path d="M5.500 1c2 4 1 7-1 9M10 2c1.500 3 1 4 0 6" fill="none" stroke="#3c5778"/></symbol>
<symbol id="t-wms" viewBox="0 0 16 16"><ellipse cx="8" cy="8" rx="7.500" ry="6.800" fill="#bacfe7" stroke="#557ba7"/><path d="M2 4l4-1 2 2-3 3-2-1zM9 5l4-2 2 4-4 5zM6 9l2 2-1 3z" fill="#3f658f"/></symbol>
<symbol id="t-vt" viewBox="0 0 16 16"><path d="M1 1h14v14H1z" fill="#3b5070"/><path d="M2.500 2.500h3v3h-3zM6.500 2.500h3v3h-3zM10.500 2.500h3v3h-3zM2.500 6.500h3v3h-3zM6.500 6.500h3v3h-3zM10.500 6.500h3v3h-3zM2.500 10.500h3v3h-3zM6.500 10.500h3v3h-3zM10.500 10.500h3v3h-3z" fill="#bccde5"/></symbol>
<symbol id="t-xyz" viewBox="0 0 16 16"><path d="M1 1h4v4H1zM6 1h4v4H6zM11 1h4v4h-4zM1 6h4v4H1zM6 6h4v4H6zM11 6h4v4h-4zM1 11h4v4H1zM6 11h4v4H6zM11 11h4v4h-4z" fill="#7194c4"/></symbol>
<symbol id="t-wcs" viewBox="0 0 16 16"><ellipse cx="8" cy="8" rx="7.500" ry="6.800" fill="#5277a3" stroke="#2d4969"/><path d="M1 5.500h14M1 10.500h14M5 2v12M11 2v12" stroke="#203a59"/><path d="M5.500 6h5v4h-5zM1.500 6.500H4v3H1.500zM12 6.500h2.500v3H12z" fill="#cfe0f3"/></symbol>
<symbol id="t-wfs" viewBox="0 0 16 16"><ellipse cx="8" cy="8" rx="7.500" ry="6.800" fill="#e4edf8" stroke="#6286b1"/><path d="M4 4l4 8 2-7 3-1M1 6h3M12 10h3" fill="none" stroke="#5278a6" stroke-width="1.300"/></symbol>
<symbol id="t-arc" viewBox="0 0 16 16"><ellipse cx="8" cy="8" rx="7.500" ry="6.800" fill="#e4edf8" stroke="#6286b1"/><path d="M1 6l4 1 1 5-3 1zM6 2l3 1-2 3zM9 7l5-3" fill="#38526f" stroke="#38526f"/><path d="M6 6l3 7 3-8" fill="none" stroke="#5278a6" stroke-width="1.300"/></symbol>
<symbol id="t-node" viewBox="0 0 16 16"><path d="M8 1.500v13M2.500 4.700l11 6.600M13.500 4.700l-11 6.600" stroke="#688fc2" stroke-width="3" stroke-linecap="round"/><circle cx="8" cy="8" r="1.300" fill="#e2eaf5"/></symbol>
<symbol id="float" viewBox="0 0 12 12"><rect x=".8" y=".8" width="10.400" height="10.400" rx="2" fill="none" stroke="#666" stroke-width="1.100"/><path d="M5 5V3h4v4H7M3 5h4v4H3z" fill="none" stroke="#555"/></symbol>
<symbol id="close" viewBox="0 0 12 12"><rect x=".8" y=".8" width="10.400" height="10.400" rx="2" fill="none" stroke="#666" stroke-width="1.100"/><path d="M3.500 3.500l5 5M8.500 3.500l-5 5" stroke="#444" stroke-width="2"/></symbol>
<symbol id="poly" viewBox="0 0 16 16"><path d="M.5 5C1 1 5 2.500 7 4s5-2.500 8-1.500c1.500.5.500 4 .5 6s-2 2-4 1-4-1-6 2-5 2-5-1z" fill="#e4e3e5" stroke="#949396"/></symbol>
</svg>

<header class="title">
<svg class="logo" viewBox="0 0 16 16"><circle cx="7.500" cy="7.500" r="5.700" fill="none" stroke="#6ba53a" stroke-width="3"/><path d="M7 7l7.500 8.500" stroke="#e9b334" stroke-width="3"/><path d="M10.500 11l4.500 5" stroke="#61a03a" stroke-width="3"/><path d="M6.500 6.500h4l-4 4z" fill="#e57d38"/></svg>
<span>*progetto — QGIS</span>
</header>
<nav class="menu">
<span>P<u>r</u>ogetto</span><span><u>M</u>odifica</span><span><u>V</u>isualizza</span><span><u>L</u>ayer</span><span><u>I</u>mpostazioni</span><span><u>P</u>lugins</span><span>Vett<u>o</u>re</span><span><u>R</u>aster</span><span><u>D</u>atabase</span><span><u>W</u>eb</span><span><u>M</u>esh</span><span>Pro<u>c</u>essing</span><span><u>G</u>uida</span>
</nav>
<div class="bar">
<i class="grip first"></i>
<svg class="ic"><use href="#new"/></svg><svg class="ic"><use href="#open"/></svg><svg class="ic"><use href="#save"/></svg><svg class="ic"><use href="#layout"/></svg><svg class="ic"><use href="#layouts"/></svg><svg class="ic"><use href="#style"/></svg>
<i class="grip"></i>
<span class="pressed"><svg class="ic"><use href="#hand"/></svg></span><svg class="ic"><use href="#panmap"/></svg><svg class="ic"><use href="#zin"/></svg><svg class="ic"><use href="#zout"/></svg><svg class="ic"><use href="#zfull"/></svg><svg class="ic"><use href="#zsel"/></svg><svg class="ic"><use href="#zlayer"/></svg><svg class="ic"><use href="#znative"/></svg><svg class="ic"><use href="#zlast"/></svg><svg class="ic"><use href="#znext"/></svg><svg class="ic"><use href="#mapview"/></svg><svg class="ic"><use href="#map3d"/></svg><svg class="ic"><use href="#bookmarkNew"/></svg><svg class="ic"><use href="#bookmarks"/></svg><svg class="ic"><use href="#clock"/></svg><svg class="ic"><use href="#refresh"/></svg>
<i class="grip"></i>
<svg class="ic"><use href="#select"/></svg><i class="drop"></i><svg class="ic"><use href="#selform"/></svg><i class="drop"></i><svg class="ic"><use href="#deselect"/></svg><i class="drop"></i><svg class="ic"><use href="#selloc"/></svg>
<i class="grip"></i>
<svg class="ic"><use href="#help"/></svg>
<i class="grip"></i>
<svg class="ic"><use href="#identify"/></svg><svg class="ic"><use href="#abacus"/></svg><svg class="ic"><use href="#gear"/></svg><svg class="ic"><use href="#sigma"/></svg><svg class="ic"><use href="#table"/></svg><i class="drop"></i><svg class="ic"><use href="#measure"/></svg><i class="drop"></i><svg class="ic"><use href="#tip"/></svg><svg class="ic"><use href="#play"/></svg>
</div>
<div class="bar second">
<i class="grip first"></i>
<svg class="ic"><use href="#sources"/></svg><svg class="ic"><use href="#gpkg"/></svg><svg class="ic"><use href="#shp"/></svg><svg class="ic"><use href="#spatial"/></svg><svg class="ic"><use href="#chip"/></svg><svg class="ic"><use href="#mesh"/></svg><svg class="ic"><use href="#virt"/></svg>
<i class="grip"></i>
<svg class="ic"><use href="#pens"/></svg><svg class="ic"><use href="#pencil"/></svg><svg class="ic"><use href="#gsave"/></svg><svg class="ic"><use href="#gadd"/></svg><svg class="ic"><use href="#gvert"/></svg><i class="drop dim"></i><svg class="ic"><use href="#gattr"/></svg><svg class="ic"><use href="#gtrash"/></svg><svg class="ic"><use href="#cut"/></svg><svg class="ic"><use href="#copy"/></svg><svg class="ic"><use href="#paste"/></svg><svg class="ic"><use href="#undo"/></svg><svg class="ic"><use href="#redo"/></svg>
<i class="grip"></i>
<svg class="ic"><use href="#globeadd"/></svg><svg class="ic"><use href="#globefind"/></svg><svg class="ic"><use href="#binoc"/></svg>
<i class="grip"></i>
<svg class="ic"><use href="#python"/></svg><svg class="ic"><use href="#kml"/></svg><svg class="ic"><use href="#kmz"/></svg><svg class="ic"><use href="#html"/></svg><svg class="ic"><use href="#profile"/></svg><svg class="ic"><use href="#user"/></svg><svg class="ic"><use href="#archive"/></svg><svg class="ic"><use href="#ginfo"/></svg>
<i class="grip near"></i>
<svg class="ic"><use href="#label"/></svg><svg class="ic"><use href="#diagram"/></svg><i class="line"></i><svg class="ic"><use href="#labpin"/></svg><svg class="ic"><use href="#labred"/></svg><i class="line"></i><svg class="ic"><use href="#labypin"/></svg><svg class="ic"><use href="#labeye"/></svg>
</div>
<main class="work">
<aside class="side">
<i class="hgrip"></i>
<div><svg><use href="#setsq"/></svg></div><div class="wide"><svg><use href="#dpen"/></svg><i class="drop dim"></i></div><div class="wide"><svg><use href="#dmove"/></svg><i class="drop dim"></i></div><div><svg><use href="#drot"/></svg></div><div><svg><use href="#dscale"/></svg></div><div><svg><use href="#dsimp"/></svg></div><div><svg><use href="#dring"/></svg></div><div><svg><use href="#dpart"/></svg></div><div><svg><use href="#dfill"/></svg></div><div><svg><use href="#ddelr"/></svg></div><div><svg><use href="#ddelp"/></svg></div><div><svg><use href="#dresh"/></svg></div><div><svg><use href="#doff"/></svg></div><div><svg><use href="#drev"/></svg></div><div><svg><use href="#dtrim"/></svg></div><div><svg><use href="#dsplit"/></svg></div><div><svg><use href="#dsplit"/></svg></div><div><svg><use href="#dmerge"/></svg></div><div><svg><use href="#dattr"/></svg></div><div class="wide"><svg><use href="#drsym"/></svg><i class="drop dim"></i></div>
</aside>
<section class="docks">
<div class="dhead"><span>Browser</span><svg><use href="#float"/></svg><svg><use href="#close"/></svg></div>
<div class="dtools"><svg><use href="#addlay"/></svg><svg><use href="#refresh"/></svg><svg><use href="#filter"/></svg><svg><use href="#collapse"/></svg><svg><use href="#info"/></svg></div>
<div class="browser">
<ul class="tree">
<li><b></b><svg><use href="#t-book"/></svg><span class="loose">Segnalibri Spaziali</span></li>
<li><b></b><svg><use href="#t-proj"/></svg><span>Home Progetto</span></li>
<li><b></b><svg><use href="#t-home"/></svg><span>Home</span></li>
<li><b></b><svg><use href="#t-c"/></svg><span>C:\</span></li>
<li><b></b><svg><use href="#t-d"/></svg><span class="loose">D:\ (Volume)</span></li>
<li><b></b><svg><use href="#t-g"/></svg><span class="loose">G:\ (Google Drive)</span></li>
<li><b></b><svg><use href="#t-gpkg"/></svg><span class="loose">GeoPackage</span></li>
<li><b></b><svg><use href="#feather"/></svg><span>SpatiaLite</span></li>
<li><b></b><svg><use href="#t-pg"/></svg><span>PostgreSQL</span></li>
<li><b class="leaf"></b><svg><use href="#t-hana"/></svg><span class="tight">SAP HANA</span></li>
<li><b class="leaf"></b><svg><use href="#t-ms"/></svg><span class="plain">MS SQL Server</span></li>
<li><b></b><svg><use href="#t-wms"/></svg><span class="tight">WMS/WMTS</span></li>
<li><b></b><svg><use href="#t-vt"/></svg><span>Vector Tiles</span></li>
<li><b></b><svg><use href="#t-xyz"/></svg><span class="plain">XYZ Tiles</span></li>
<li><b></b><svg><use href="#t-wcs"/></svg><span class="tight">WCS</span></li>
<li><b></b><svg><use href="#t-wfs"/></svg><span class="plain">WFS / OGC API - Features</span></li>
<li><b></b><svg><use href="#t-arc"/></svg><span class="plain">ArcGIS REST Servers</span></li>
<li><b class="leaf"></b><svg><use href="#t-node"/></svg><span class="plain">GeoNode</span></li>
</ul>
<div class="scroll"><i class="up"></i><i class="thumb"></i><i class="down"></i></div>
</div>
<div class="split"></div>
<div class="dhead"><span>Layer</span><svg><use href="#float"/></svg><svg><use href="#close"/></svg></div>
<div class="dtools"><svg><use href="#brush"/></svg><svg><use href="#addgrp"/></svg><svg><use href="#eye"/></svg><svg><use href="#filt2"/></svg><svg class="near"><use href="#eps"/></svg><i class="drop"></i><svg><use href="#expand"/></svg><svg><use href="#collapse"/></svg><svg><use href="#remlay"/></svg></div>
<div class="layers">
<div class="row top"><i class="opened"></i><i class="chk on"></i><svg class="geom"><use href="#poly"/></svg><span>edifici</span></div>
<div class="row sub"><i class="chk on"></i><i class="sw r1"></i><span>R1</span></div>
<div class="row sub"><i class="chk on"></i><i class="sw r2"></i><span>R2</span></div>
<div class="row sub"><i class="chk on"></i><i class="sw r3"></i><span>R3</span></div>
<div class="row sub"><i class="chk on"></i><i class="sw rx"></i></div>
<div class="row off"><i class="chk"></i><i class="sw ar"></i><span>aree_rischio</span></div>
</div>
</section>
<svg class="map" viewBox="309 126 971 676">
<g transform="translate(770 170) scale(.33333)" fill="#2ba8d8">
<path d="M628 51L776 101 733 226 586 176z"/><path d="M857 135L1011 184 970 313 817 265z"/>
<path d="M1189 280L1223 290 1230 265 1376 311 1369 334 1423 350 1405 412 1389 409 1374 457 1156 388z"/>
<path d="M439 332L462 341 466 334 630 398 605 467 580 459 547 543 382 479z"/>
<path d="M747 397L899 473 846 591 719 555 723 543 687 528z"/>
<path d="M1002 511L1205 588 1190 633 1197 638 1164 728 941 645 967 575 983 563z"/>
<path d="M360 573L495 625 433 787 298 736z"/>
<path d="M762 720L892 770 838 910 694 856 729 766 743 769z"/>
<path d="M1289 657L1329 653 1327 632 1396 628 1401 694 1369 696 1382 857 1397 858 1406 963 1293 971 1285 883 1307 881z"/>
</g>
<g transform="translate(770 450) scale(.33333)">
<g fill="#e67851"><path d="M114 37L242 70 231 132 233 212 147 215 97 272 38 216 86 167 83 109 96 109z"/><path d="M445 136L512 176 573 159 600 255 627 249 638 291 587 305 577 273 498 295 486 252 405 210z"/><path d="M923 272L1073 343 1010 478 970 460 974 448 864 398z"/></g>
<g fill="#75ff52"><path d="M457 390L621 462 558 605 394 534z"/><path d="M773 528L921 635 851 734 703 627z"/><path d="M1059 735L1143 769 1157 736 1312 801 1248 953 1162 916 1151 938 1000 875z"/><path d="M1348 616L1384 612 1381 599 1428 594 1430 605 1496 600 1505 710 1358 722z"/><path d="M1450 876L1560 915V1056L1405 998z"/></g>
</g>
<g transform="translate(341 279)"><path class="cursor" d="M7 23.500c0-3-4-6-5-9-.3-2 2-2 3-.5l1.500 1.500V5c0-2 2.500-2 2.500 0v5.500V2.500c0-2 2.700-2 2.700 0v8V3.500c0-2 2.600-2 2.600 0v7V6c0-2 2.600-2 2.600 0v9c0 3-2 5-2 8.500z"/></g>
</svg>
</main>
</body>
</html>
```
FILE: styles.css
```css
* { box-sizing: border-box; }
body {
  margin: 0;
  width: 1280px;
  height: 802px;
  overflow: hidden;
  display: flex;
  flex-direction: column;
  background: #f0eef0;
  font: 14px/21px Lato, Carlito, sans-serif;
  color: #080808;
}
svg { flex: none; display: block; overflow: visible; }
.paints { position: absolute; width: 0; height: 0; }
.symbols { display: none; }
u { text-underline-offset: 2px; text-decoration-thickness: 1px; }

.title { flex: none; height: 23px; background: #fff; display: flex; align-items: center; gap: 5px; padding-left: 2px; font: 12px/23px "Open Sans", sans-serif; color: #8c8a8c; letter-spacing: -.38px; }
.logo { width: 16px; height: 16px; }
.menu {
  flex: none;
  height: 23px;
  display: grid;
  grid-template-columns: 69px 70px 78px 49px 96px 61px 61px 56px 75px 44px 50px 84px 60px;
  padding-left: 10px;
  line-height: 23px;
  letter-spacing: .16px;
  color: #999799;
  white-space: nowrap;
}

.bar {
  flex: none;
  height: 40px;
  display: flex;
  align-items: center;
  border-top: 1px solid #d5d3d5;
  border-bottom: 1px solid #b5b3b5;
  background: linear-gradient(#fcfbfd, #f0eef1);
  overflow: hidden;
}
.bar.second { border-top: 0; border-bottom: 2px solid #b8b6b8; }
.ic { width: 24px; height: 24px; margin: 0 4.5px; }
.pressed { flex: none; width: 32px; height: 31px; display: flex; align-items: center; margin: 0 .5px; border: 1px solid #aaa8aa; border-radius: 3px; background: #dddbdd; }
.pressed .ic { margin: 0 3px; }
.grip { flex: none; width: 16px; height: 17px; }
.grip::after { content: ""; display: block; width: 5px; height: 17px; margin-left: 5px; background: radial-gradient(circle at 1px 1px, #d2d0d2 .7px, transparent 1px) 0 0 / 3px 3px; }
.grip.first { width: 12.5px; }
.grip.near { margin-right: -1px; }
.drop { flex: none; width: 12px; height: 4px; display: flex; justify-content: center; }
.drop::after { content: ""; margin-left: -2px; border: 3.5px solid transparent; border-top: 4px solid #666; border-bottom: 0; }
.drop.dim::after { border-top-color: #aaa9ab; }
.line { flex: none; width: 1px; height: 20px; margin: 0 3px; background: #cac8ca; }

.glyph { font-family: "Open Sans", sans-serif; fill: #444; }
.pale { fill: #bbb; }
.serif { font-family: "Liberation Serif", serif; fill: #fff; }
.ital { font-style: italic; font-weight: bold; }
.purple { fill: #6c3a80; }
.tag { font: bold 9.5px "Liberation Sans", sans-serif; fill: #fff; text-anchor: middle; }
.tag.tight { font-size: 8.5px; }
.abc { font: bold 8.5px "Open Sans", sans-serif; fill: #333; text-anchor: middle; }
.abc.red { fill: #d22b2b; }

.work { flex: 1; min-height: 0; display: flex; }
.side { flex: none; width: 51px; background: linear-gradient(90deg, #fbfafc, #ebe9ec); border-right: 1px solid #b9b7b9; }
.hgrip { display: block; width: 17px; height: 6px; margin: 3px 0 2px 18px; background: radial-gradient(circle at 1px 1px, #d0ced0 .7px, transparent 1px) 0 0 / 3px 3px; }
.side div { height: 32px; display: flex; align-items: center; padding-left: 14px; }
.side div.wide { padding-left: 9px; }
.side svg { width: 24px; height: 24px; opacity: .8; }
.side .wide .drop { margin-left: 4px; }

.docks { flex: none; width: 258px; border-right: 1px solid #b9b7b9; display: flex; flex-direction: column; padding: 0 6px 0 1px; }
.dhead { flex: none; height: 19px; display: flex; align-items: center; gap: 2px; padding: 0 1px 0 4px; letter-spacing: .2px; }
.dhead span { flex: 1; }
.dhead svg { width: 12px; height: 12px; }
.dtools { flex: none; height: 32px; display: flex; align-items: center; gap: 9px; padding-left: 8px; }
.dtools svg { width: 16px; height: 16px; }
.dtools .near { margin-right: -5px; }
.dtools .drop { margin-right: -3px; }
.browser { flex: none; height: 398px; border: 1px solid #b1afb1; background: #fff; display: flex; }
.tree { flex: 1; margin: 0; padding: 0; list-style: none; letter-spacing: .22px; }
.tree li { height: 21px; display: flex; align-items: center; white-space: nowrap; }
.tree .loose { letter-spacing: .4px; }
.tree .plain { letter-spacing: .08px; }
.tree .tight { letter-spacing: -.3px; }
.tree b { width: 5px; margin: 0 8px 0 6px; border: 3.5px solid transparent; border-left: 5px solid #555; border-right: 0; }
.tree b.leaf { border-color: transparent; }
.tree svg { width: 16px; height: 16px; margin-right: 6px; }
.scroll { flex: none; width: 14px; border-left: 1px solid #c0bec0; display: flex; flex-direction: column; background: #fdfdfd; }
.scroll i { flex: none; height: 13px; display: flex; align-items: center; justify-content: center; }
.scroll .up::after { content: ""; border: 4px solid transparent; border-bottom: 4px solid #555; border-top: 0; }
.scroll .thumb { height: 21px; background: #e9e7e9; border: solid #bbb9bb; border-width: 1px 0; }
.scroll .down { margin-top: auto; height: 14px; border-top: 1px solid #bbb9bb; }
.scroll .down::after { content: ""; border: 4px solid transparent; border-top: 4px solid #555; border-bottom: 0; }
.split { flex: none; height: 7px; margin: 0 0 0 117px; width: 17px; background: radial-gradient(circle at 1px 1px, #d0ced0 .7px, transparent 1px) 0 1px / 3px 3px repeat-x; }
.layers { flex: 1; border: 1px solid #b1afb1; border-bottom: 0; background: #fff; }
.row { height: 21px; display: flex; align-items: center; }
.row.top { background: #f1eff1; font-weight: bold; letter-spacing: .35px; }
.row.top span { text-decoration: underline; text-underline-offset: 2px; }
.opened { margin: 0 9px 0 6px; border: 4px solid transparent; border-top: 4px solid #555; border-bottom: 0; }
.chk { width: 14px; height: 14px; border: 1px solid #bbb9bb; background: #fff; display: flex; justify-content: center; align-items: center; }
.chk.on::after { content: ""; width: 5px; height: 9px; margin-top: -2px; border: solid #111; border-width: 0 2px 2px 0; transform: rotate(38deg) skewY(8deg); }
.geom { width: 16px; height: 16px; margin: 0 6px; }
.row.sub { height: 20.9px; padding-left: 43px; }
.sw { width: 18px; height: 18px; margin: 0 6px; border: 1px dotted #333; }
.r1 { background: #2ba8d8; }
.r2 { background: #a200d0; }
.r3 { background: #75ff52; border: 1px solid #4ba738; }
.rx { background: #e67851; border: 1px solid #96503a; }
.row.off { padding-left: 23px; font-size: 15px; font-weight: bold; font-style: italic; color: #808080; letter-spacing: .5px; }
.ar { width: 16px; height: 16px; background: #9470b5; border: 1px solid #665076; }

.map { width: 971px; height: 676px; background: #fff; overflow: hidden; }
.map path { stroke: #333; stroke-width: 3; }
.map .cursor { fill: #fff; stroke: #222; stroke-width: 1.2; }
```
